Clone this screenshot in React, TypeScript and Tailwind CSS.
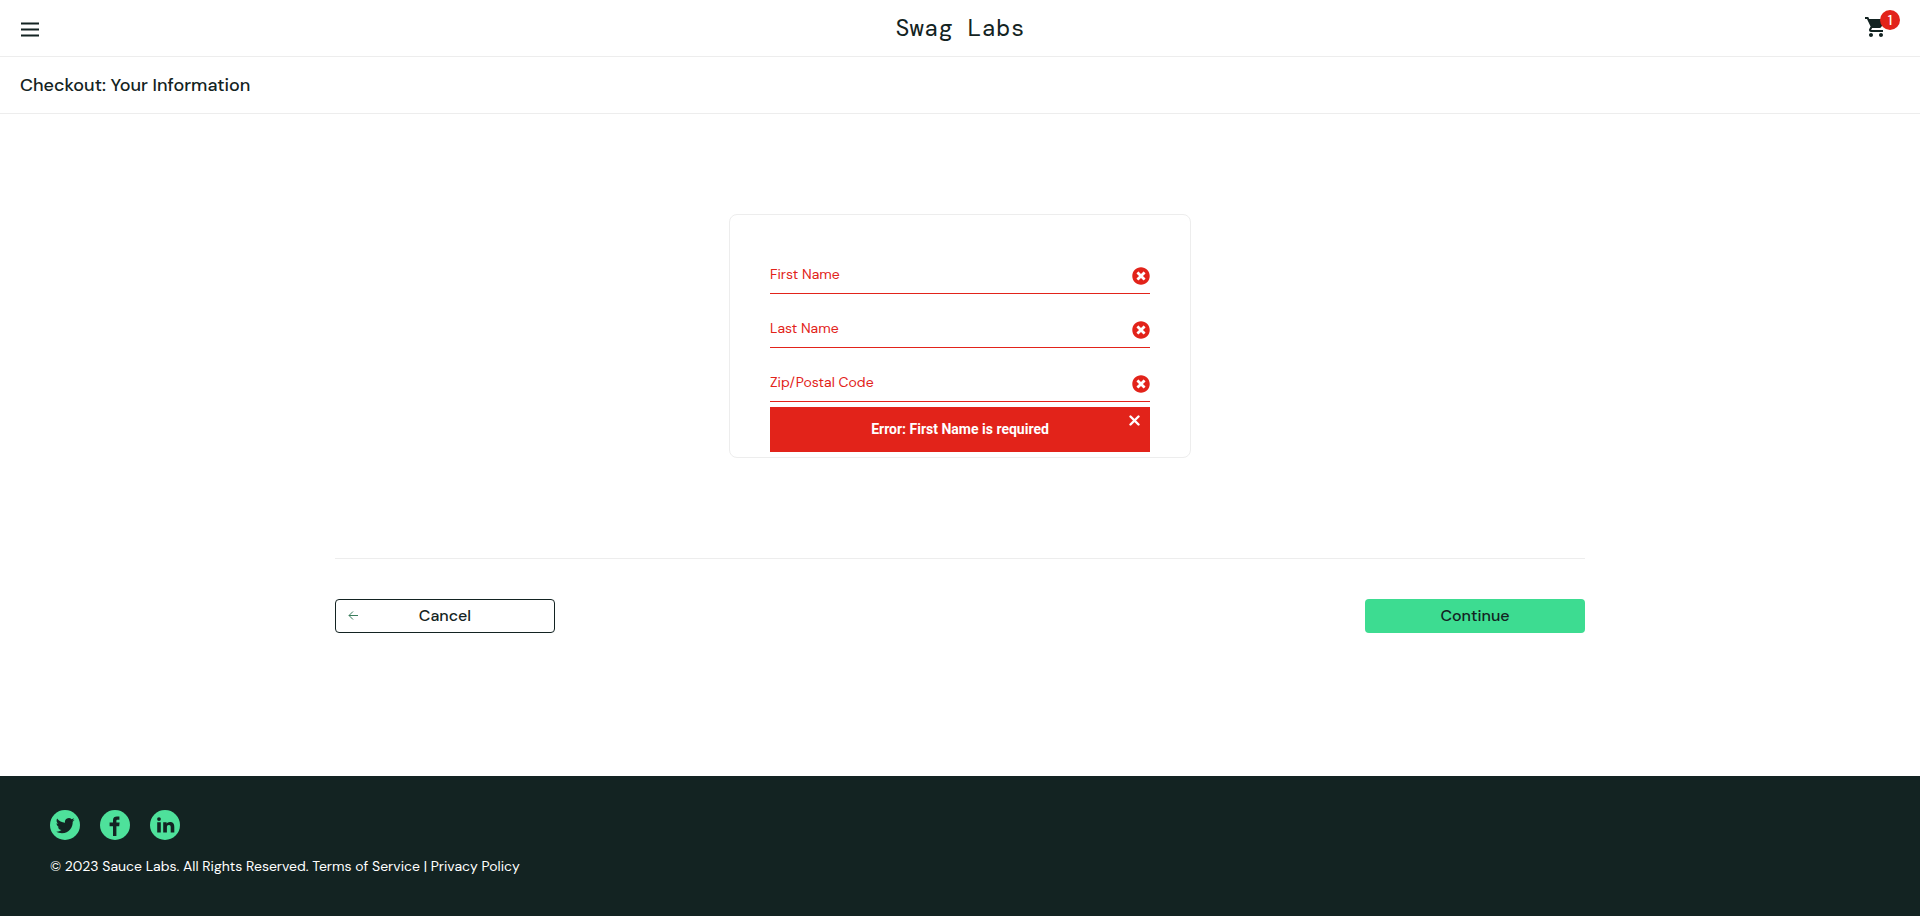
import { useState } from "react";

function CloseCircle() {
  return (
    <svg viewBox="0 0 512 512" className="pointer-events-none absolute right-0 bottom-[9px] h-[18px] w-[18px] fill-[#e2231a]" aria-hidden="true">
      <path d="M256 8C119 8 8 119 8 256s111 248 248 248 248-111 248-248S393 8 256 8zm121.600 313.100c4.700 4.700 4.700 12.300 0 17L338 377.600c-4.700 4.700-12.300 4.700-17 0L256 312l-65.100 65.600c-4.700 4.700-12.300 4.700-17 0L134.400 338c-4.700-4.700-4.700-12.300 0-17l65.600-65-65.600-65.100c-4.700-4.700-4.700-12.300 0-17l39.600-39.600c4.700-4.700 12.300-4.700 17 0l65 65.700 65.100-65.600c4.700-4.700 12.300-4.700 17 0l39.600 39.600c4.700 4.700 4.700 12.300 0 17L312 256l65.600 65.100z" />
    </svg>
  );
}

function Field({ label, id }: { label: string; id: string }) {
  return (
    <div className="relative mb-[15px]">
      <input
        id={id}
        type="text"
        aria-label={label}
        placeholder={label}
        className="block h-[39px] w-full border-b border-[#e2231a] bg-transparent text-sm text-[#e2231a] outline-none placeholder:text-[#e2231a] placeholder:opacity-100"
      />
      <CloseCircle />
    </div>
  );
}

const socials = [
  {
    name: "Twitter",
    d: "M24.600 9.800c-.7.300-1.500.5-2.200.600.8-.5 1.400-1.200 1.700-2.100-.8.400-1.600.8-2.500.900A3.900 3.900 0 0 0 15 12.700c-3.200-.1-6-1.700-7.900-4.100-1.100 1.900-.5 4.100 1.200 5.200-.7 0-1.200-.2-1.800-.5 0 1.900 1.300 3.500 3.100 3.900-.5.100-1.100.1-1.700.1.500 1.500 1.900 2.600 3.600 2.700A7.800 7.800 0 0 1 6 21.600c1.700 1.100 3.800 1.700 6 1.700 7.100 0 11-6 10.700-11.500.8-.5 1.400-1.200 1.900-2z",
  },
  {
    name: "Facebook",
    d: "M13 26v-9.800H9.600v-3.600H13V10c0-2.700 1.600-3.600 4-3.600 1.100 0 2.100.1 2.400.2v3.100h-1.700c-1.100 0-1.300.5-1.300 1.300v1.600h3.200l-.4 3.600h-2.800V26z",
  },
  {
    name: "LinkedIn",
    d: "M7.200 12.300h3.600v10.200H7.200zM9 7.200a1.900 1.900 0 1 1 0 3.800 1.900 1.900 0 0 1 0-3.800zM13.200 12.300h3.400v1.500c.6-1 1.700-1.800 3.400-1.800 3.400 0 4.300 2.200 4.300 5v5.500h-3.600v-5c0-1.200 0-2.600-1.800-2.600s-2 1.200-2 2.500v5.100h-3.700z",
  },
];

export default function App() {
  const [showError, setShowError] = useState(true);
  return (
    <div className="flex min-h-screen flex-col bg-white font-['DM_Sans',Inter,sans-serif] text-[#132322]">
      <header className="border-b border-[#ededed]">
        <div className="flex h-14 items-center justify-between px-5">
          <div className="flex flex-1">
            <button type="button" aria-label="Open Menu" className="pt-0.5">
              <svg viewBox="0 0 20 20" className="block h-5 w-5" aria-hidden="true">
                <path d="M1 4.500h18M1 10.500h18M1 16.500h18" stroke="#132322" strokeWidth="2" />
              </svg>
            </button>
          </div>
          <div className="font-['DM_Mono','Liberation_Mono',monospace] text-2xl">Swag Labs</div>
          <div className="flex flex-1 justify-end">
            <a href="#cart" aria-label="Shopping cart, 1 item" className="relative block h-10 w-10">
              <svg viewBox="0 0 24 24" className="mt-[7px] ml-1 h-6 w-6 fill-[#132322]" aria-hidden="true">
                <path d="M7 18c-1.100 0-1.990.9-1.990 2S5.900 22 7 22s2-.9 2-2-.9-2-2-2zM1 2v2h2l3.600 7.590-1.350 2.450c-.16.280-.25.610-.25.960 0 1.100.9 2 2 2h12v-2H7.420c-.14 0-.25-.11-.25-.25l.03-.12.9-1.630h7.450c.75 0 1.410-.41 1.750-1.030l3.580-6.490A1.003 1.003 0 0 0 20 4H5.210l-.94-2H1zm16 16c-1.100 0-1.990.9-1.990 2s.89 2 1.990 2 2-.9 2-2-.9-2-2-2z" />
              </svg>
              <span className="absolute top-0.5 right-0 flex h-5 w-5 items-center justify-center rounded-full bg-[#e2231a] text-sm font-medium text-white">1</span>
            </a>
          </div>
        </div>
        <div className="flex h-[57px] items-center border-t border-[#ededed] px-5">
          <h1 className="text-lg font-medium">Checkout: Your Information</h1>
        </div>
      </header>

      <main className="flex-1 px-5 pt-[100px] pb-10">
        <form className="mx-auto max-w-[1250px]" onSubmit={(e) => { e.preventDefault(); setShowError(true); }}>
          <div className="mx-auto mb-[100px] max-w-[462px] rounded-lg border border-[#ededed] px-10 pt-10 pb-[5px]">
            <Field id="first-name" label="First Name" />
            <Field id="last-name" label="Last Name" />
            <Field id="postal-code" label="Zip/Postal Code" />
            <div className="-mt-2.5 h-[45px]">
              {showError && (
                <div className="relative flex h-full items-center justify-center bg-[#e2231a] pb-0.5">
                  <h3 className="font-[Roboto,sans-serif] text-sm font-bold text-white">Error: First Name is required</h3>
                  <button type="button" aria-label="Dismiss error" onClick={() => setShowError(false)} className="absolute top-2 right-2.5">
                    <svg viewBox="0 0 11 11" className="block h-[11px] w-[11px]" aria-hidden="true">
                      <path d="M1.500 1.500l8 8M9.500 1.500l-8 8" stroke="#fff" strokeWidth="2.400" strokeLinecap="round" />
                    </svg>
                  </button>
                </div>
              )}
            </div>
          </div>
          <div className="flex justify-between border-t border-[#ededed] pt-10">
            <button type="button" className="relative h-[34px] w-[220px] rounded border border-[#132322] bg-white text-base font-medium">
              <svg viewBox="0 0 10 10" className="absolute top-[11px] left-3 h-2.5 w-2.5" fill="none" stroke="#3a7d5c" aria-hidden="true">
                <path d="M10 4.500H1M5 .5l-4 4 4 4" />
              </svg>
              Cancel
            </button>
            <button type="submit" className="h-[34px] w-[220px] rounded bg-[#3ddc91] text-base font-medium">Continue</button>
          </div>
        </form>
      </main>

      <footer className="bg-[#132322] px-[50px] pt-[34px] pb-10 text-white">
        <ul className="flex gap-5">
          {socials.map((s) => (
            <li key={s.name}>
              <a href={`#${s.name.toLowerCase()}`} aria-label={s.name} className="block">
                <svg viewBox="0 0 30 30" className="block h-[30px] w-[30px]" aria-hidden="true">
                  <circle cx="15" cy="15" r="15" fill="#4ee19b" />
                  <path d={s.d} fill="#132322" />
                </svg>
              </a>
            </li>
          ))}
        </ul>
        <p className="mt-4 text-sm">© 2023 Sauce Labs. All Rights Reserved. Terms of Service | Privacy Policy</p>
      </footer>
    </div>
  );
}
